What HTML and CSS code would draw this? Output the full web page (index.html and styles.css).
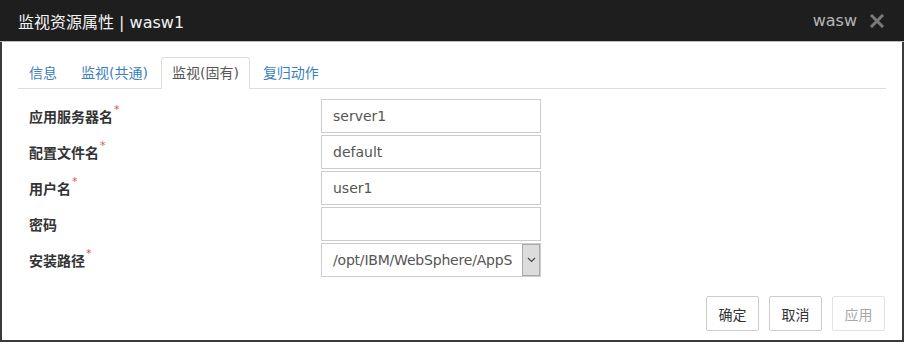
FILE: index.html
```html
<!DOCTYPE html>
<html lang="zh-CN">
<head>
  <meta charset="UTF-8" />
  <title>监视资源属性 | wasw1</title>
  <link rel="stylesheet" href="styles.css">
</head>
<body>

  <div class="dialog">

    <!-- ───── header ───── -->
    <div class="dialog-header">
      <span class="dialog-title">监视资源属性 | wasw1</span>
      <span class="dialog-tools">
        <span class="dialog-type">wasw</span>
        <svg class="dialog-close" width="14" height="14" viewBox="0 0 14 14">
          <path d="M2 2 L12 12 M12 2 L2 12" stroke="#7a7a7a" stroke-width="3" stroke-linecap="square" />
        </svg>
      </span>
    </div>

    <!-- ───── body ───── -->
    <div class="dialog-body">
      <ul class="tabs">
        <li class="tab">信息</li>
        <li class="tab">监视(共通)</li>
        <li class="tab active">监视(固有)</li>
        <li class="tab">复归动作</li>
      </ul>

      <div class="form">
        <div class="form-row">
          <label class="form-label">应用服务器名<sup class="req">*</sup></label>
          <input class="form-input" type="text" value="server1" />
        </div>
        <div class="form-row">
          <label class="form-label">配置文件名<sup class="req">*</sup></label>
          <input class="form-input" type="text" value="default" />
        </div>
        <div class="form-row">
          <label class="form-label">用户名<sup class="req">*</sup></label>
          <input class="form-input" type="text" value="user1" />
        </div>
        <div class="form-row">
          <label class="form-label">密码</label>
          <input class="form-input" type="password" value="" />
        </div>
        <div class="form-row">
          <label class="form-label">安装路径<sup class="req">*</sup></label>
          <div class="combo">
            <span class="combo-text">/opt/IBM/WebSphere/AppS</span>
            <span class="combo-btn">
              <svg width="9" height="6" viewBox="0 0 9 6">
                <path d="M1 1 L4.5 4.5 L8 1" fill="none" stroke="#444" stroke-width="1.2" />
              </svg>
            </span>
          </div>
        </div>
      </div>

      <div class="actions">
        <button class="btn">确定</button>
        <button class="btn">取消</button>
        <button class="btn" disabled>应用</button>
      </div>
    </div>
  </div>

</body>
</html>
```

FILE: styles.css
```css
:root {
  --c-frame:   #3a3a3a;
  --c-head:    #1e1e1e;
  --c-link:    #3a7fc1;
  --c-text:    #333333;
  --c-input:   #555555;
  --c-border:  #dddddd;
  --c-req:     #d9534f;

  --font-base: "DejaVu Sans", "Noto Sans CJK SC", sans-serif;
}

/* ───── base ───── */
html, body {
  margin: 0;
  padding: 0;
  background: #ffffff;
}

body {
  font-family: var(--font-base);
  font-size: 14px;
  color: var(--c-text);
}

.dialog {
  width: 904px;
  height: 342px;
  box-sizing: border-box;
  border: 2px solid var(--c-frame);
  border-top: none;
  display: flex;
  flex-direction: column;
}

/* ───── header ───── */
.dialog-header {
  height: 42px;
  background: var(--c-head);
  margin: 0 -2px;
  padding: 0 20px 0 18px;
  display: flex;
  align-items: center;
  justify-content: space-between;
  border-bottom: 1px solid #bdbdbd;
  box-sizing: border-box;
}

.dialog-title {
  color: #f2f2f2;
  font-size: 16px;
}

.dialog-tools {
  display: flex;
  align-items: center;
  gap: 13px;
}

.dialog-type {
  color: #b5b5b5;
  font-size: 16px;
}

.dialog-close { display: block; }

/* ───── body ───── */
.dialog-body {
  flex: 1;
  padding: 15px 16px 0 16px;
  display: flex;
  flex-direction: column;
}

/* ───── tabs ───── */
.tabs {
  list-style: none;
  margin: 0;
  padding: 0;
  display: flex;
  border-bottom: 1px solid var(--c-border);
  height: 32px;
  box-sizing: border-box;
}

.tab {
  padding: 0 10px;
  margin-right: 2px;
  line-height: 30px;
  color: var(--c-link);
  border: 1px solid transparent;
  border-radius: 3px 3px 0 0;
}

.tab.active {
  color: var(--c-input);
  border-color: var(--c-border);
  border-bottom-color: #ffffff;
  background: #ffffff;
  height: 32px;
  box-sizing: border-box;
}

/* ───── form ───── */
.form {
  margin-top: 10px;
  display: flex;
  flex-direction: column;
  gap: 2px;
}

.form-row {
  display: flex;
  align-items: center;
  height: 34px;
}

.form-label {
  width: 292px;
  padding-left: 11px;
  font-weight: bold;
  font-size: 14px;
  color: var(--c-text);
}

.req {
  color: var(--c-req);
  font-size: 11px;
  font-weight: normal;
  vertical-align: top;
  position: relative;
  top: -3px;
  margin-left: 1px;
}

.form-input,
.combo {
  width: 220px;
  height: 34px;
  box-sizing: border-box;
  border: 1px solid #cccccc;
  font-family: var(--font-base);
  font-size: 14px;
  color: var(--c-input);
  background: #ffffff;
}

.form-input {
  padding: 0 11px;
  outline: none;
  margin: 0;
}

.combo {
  display: flex;
  align-items: stretch;
  overflow: hidden;
}

.combo-text {
  flex: 1;
  padding-left: 11px;
  line-height: 32px;
  white-space: nowrap;
  overflow: hidden;
  letter-spacing: -0.2px;
}

.combo-btn {
  width: 16px;
  background: #dcdcdc;
  border: 1px solid #a9a9a9;
  display: flex;
  align-items: center;
  justify-content: center;
}

/* ───── buttons ───── */
.actions {
  margin-top: 19px;
  display: flex;
  justify-content: flex-end;
  gap: 10px;
  padding-right: 1px;
}

.btn {
  width: 53px;
  height: 35px;
  background: #ffffff;
  border: 1px solid #cccccc;
  border-radius: 2px;
  font-family: var(--font-base);
  font-size: 14px;
  color: var(--c-text);
  padding: 0;
}

.btn:disabled {
  color: #a8a8a8;
  border-color: #e2e2e2;
}
```
